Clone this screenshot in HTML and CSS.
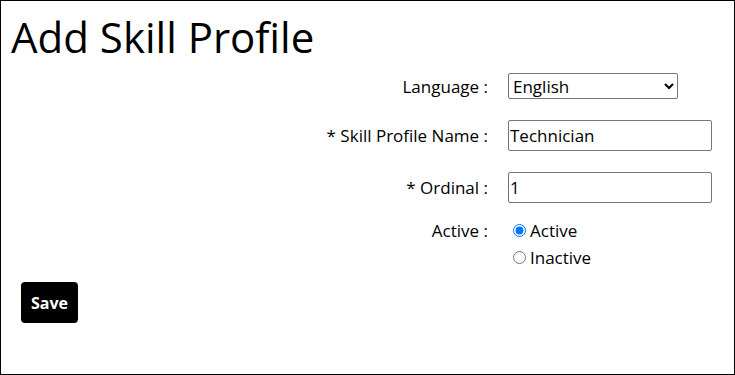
FILE: index.html
```html
<!DOCTYPE html>
<html lang="en">
<head>
<meta charset="utf-8">
<title>Add Skill Profile</title>
<link rel="stylesheet" href="styles.css">
</head>
<body>
<div class="page">
  <h1 class="title">Add Skill Profile</h1>
  <form class="form">
    <label class="label" for="lang">Language :</label>
    <div class="field">
      <select id="lang" class="select"><option>English</option></select>
    </div>
    <label class="label" for="name">* Skill Profile Name :</label>
    <div class="field">
      <input id="name" class="text" type="text" value="Technician">
    </div>
    <label class="label" for="ord">* Ordinal :</label>
    <div class="field">
      <input id="ord" class="text" type="text" value="1">
    </div>
    <span class="label label-top">Active :</span>
    <div class="field radios">
      <label class="radio"><input type="radio" name="active" checked>Active</label>
      <label class="radio"><input type="radio" name="active">Inactive</label>
    </div>
  </form>
  <button class="save" type="button">Save</button>
</div>
</body>
</html>
```

FILE: styles.css
```css
html, body {
  margin: 0;
  padding: 0;
}
body {
  font-family: "Open Sans", sans-serif;
  color: #000;
  background: #fff;
}
.page {
  box-sizing: border-box;
  width: 735px;
  height: 375px;
  border: 1px solid #000;
}
.title {
  margin: 0;
  padding: 11px 0 0 10px;
  font-size: 42px;
  font-weight: 400;
  line-height: 50px;
}
.form {
  display: grid;
  grid-template-columns: 1fr 204px;
  column-gap: 20px;
  row-gap: 21px;
  align-items: center;
  padding: 11px 22px 0 0;
  font-size: 17px;
}
.label {
  text-align: right;
}
.label-top {
  align-self: start;
  margin-top: -7px;
  padding-top: 2px;
}
.select {
  box-sizing: border-box;
  width: 170px;
  height: 26px;
  font-family: inherit;
  font-size: 17px;
  border: 1px solid #767676;
  border-radius: 2px;
  background: #fff;
  color: #000;
}
.text {
  box-sizing: border-box;
  width: 204px;
  height: 31px;
  padding: 1px 1px;
  font-family: inherit;
  font-size: 17px;
  border: 1px solid #767676;
  border-radius: 2px;
  color: #000;
}
.radios {
  display: flex;
  flex-direction: column;
  margin-top: -7px;
}
.radio {
  display: flex;
  align-items: center;
  height: 27px;
}
.radio input {
  margin: 0 4px 0 5px;
  width: 13px;
  height: 13px;
}
.save {
  margin: 11px 0 0 20px;
  width: 57px;
  height: 41px;
  padding: 0;
  background: #000;
  color: #fff;
  border: none;
  border-radius: 4px;
  font-family: inherit;
  font-size: 16px;
  font-weight: 700;
}
```
